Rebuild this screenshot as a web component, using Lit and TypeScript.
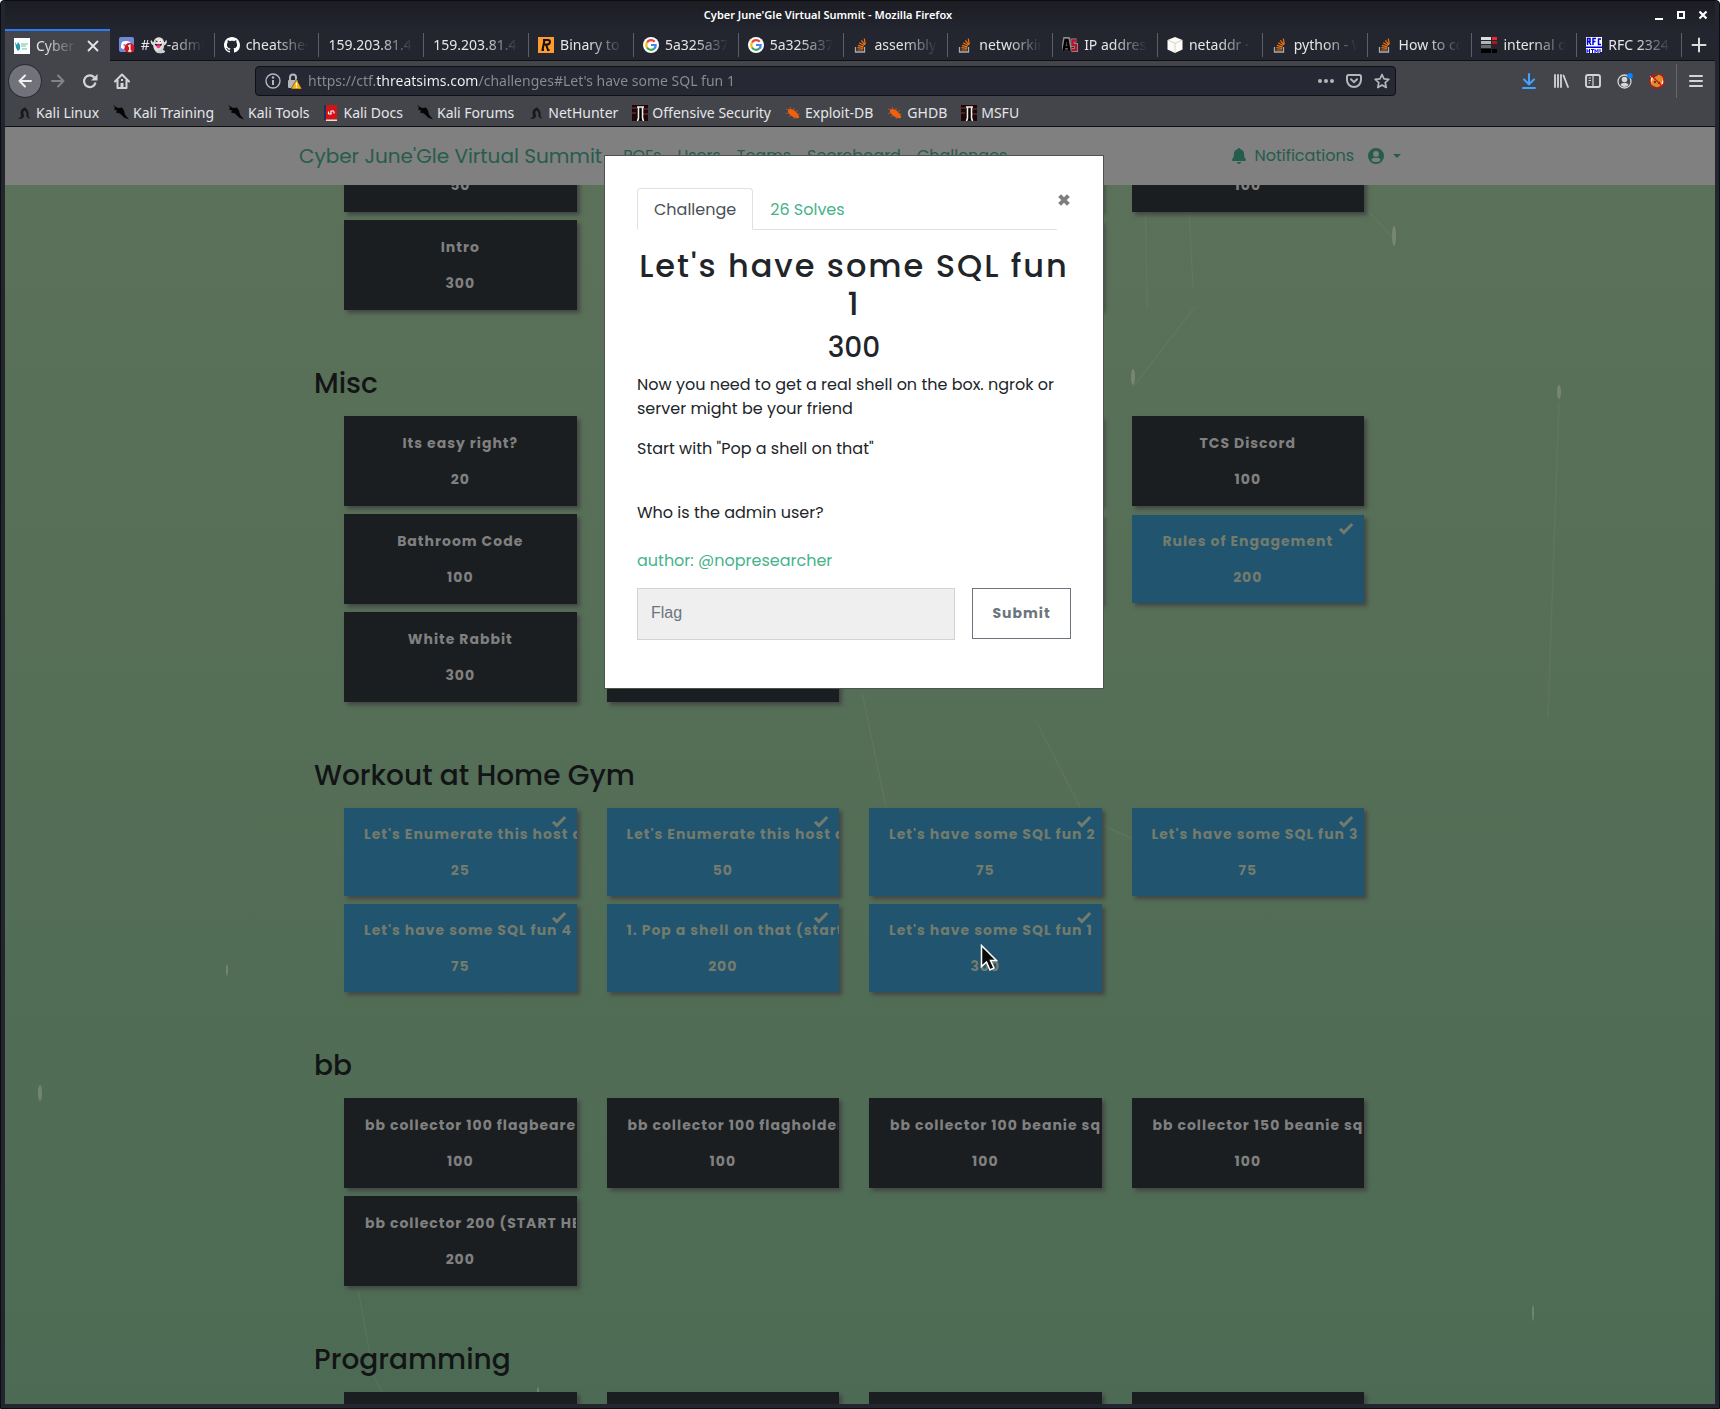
import { LitElement, html, svg, css, nothing, TemplateResult } from "lit";
import { customElement, property } from "lit/decorators.js";

type Card = { name?: string; points?: string; solved?: boolean };
type Section = { title?: string; cards: Card[] };
type Tab = { icon?: string; label: string };

const TABS: Tab[] = [
  { icon: "summit", label: "Cyber June" },
  { icon: "discord", label: "#👻-admin" },
  { icon: "github", label: "cheatsheets" },
  { label: "159.203.81.42" },
  { label: "159.203.81.42" },
  { icon: "rapid", label: "Binary to" },
  { icon: "google", label: "5a325a373" },
  { icon: "google", label: "5a325a373" },
  { icon: "stack", label: "assembly -" },
  { icon: "stack", label: "networking" },
  { icon: "as", label: "IP address" },
  { icon: "cube", label: "netaddr · P" },
  { icon: "stack", label: "python - W" },
  { icon: "stack", label: "How to con" },
  { icon: "bars", label: "internal do" },
  { icon: "rfc", label: "RFC 2324 -" },
];

const BOOKMARKS: Tab[] = [
  { icon: "dragon", label: "Kali Linux" },
  { icon: "blade", label: "Kali Training" },
  { icon: "blade", label: "Kali Tools" },
  { icon: "docs", label: "Kali Docs" },
  { icon: "blade", label: "Kali Forums" },
  { icon: "dragon", label: "NetHunter" },
  { icon: "offsec", label: "Offensive Security" },
  { icon: "bug", label: "Exploit-DB" },
  { icon: "bug", label: "GHDB" },
  { icon: "offsec", label: "MSFU" },
];

const SECTIONS: Section[] = [
  {
    cards: [{ points: "50" }, {}, {}, { points: "100" }, { name: "Intro", points: "300" }, {}, {}],
  },
  {
    title: "Misc",
    cards: [
      { name: "Its easy right?", points: "20" },
      {},
      {},
      { name: "TCS Discord", points: "100" },
      { name: "Bathroom Code", points: "100" },
      {},
      {},
      { name: "Rules of Engagement", points: "200", solved: true },
      { name: "White Rabbit", points: "300" },
      {},
    ],
  },
  {
    title: "Workout at Home Gym",
    cards: [
      { name: "Let's Enumerate this host a", points: "25", solved: true },
      { name: "Let's Enumerate this host a", points: "50", solved: true },
      { name: "Let's have some SQL fun 2", points: "75", solved: true },
      { name: "Let's have some SQL fun 3", points: "75", solved: true },
      { name: "Let's have some SQL fun 4", points: "75", solved: true },
      { name: "1. Pop a shell on that (start", points: "200", solved: true },
      { name: "Let's have some SQL fun 1", points: "300", solved: true },
    ],
  },
  {
    title: "bb",
    cards: [
      { name: "bb collector 100 flagbearer", points: "100" },
      { name: "bb collector 100 flagholder", points: "100" },
      { name: "bb collector 100 beanie sql", points: "100" },
      { name: "bb collector 150 beanie sql", points: "100" },
      { name: "bb collector 200 (START HER", points: "200" },
    ],
  },
  { title: "Programming", cards: [{}, {}, {}, {}] },
];

const ICONS: Record<string, TemplateResult> = {
  summit: svg`<rect width="16" height="16" fill="#fff"/><path d="M1 4l2 3 1-3 2 3v4l-2 2-2-3z" fill="#1d8fc4"/><path d="M3 7l2 1-1 4z" fill="#2fae5d"/><path d="M7 6h7M7 8h5M8 11h5" stroke="#5ec6a4" stroke-width="1.2"/>`,
  discord: svg`<rect width="15" height="15" rx="2" fill="#7289da"/><path d="M3 5c2-1.500 6-1.500 8 0 1 2 1.500 4 1 6-1 .8-2 1-2.500 1l-.7-1H5.500l-.7 1C4 12 3 11.500 2 11c-.3-2 .2-4 1-6z" fill="#fff"/><circle cx="5.300" cy="8" r="1" fill="#7289da"/><circle cx="10.500" cy="11" r="5" fill="#d8141c"/><path d="M9.200 9.300l1.600-1v5.600M9.200 13.900h3.200" stroke="#fff" stroke-width="1.500" fill="none"/>`,
  github: svg`<path fill="#fff" fill-rule="evenodd" d="M8 0C3.580 0 0 3.580 0 8c0 3.540 2.290 6.530 5.470 7.590.4.070.55-.17.55-.38 0-.19-.01-.82-.01-1.490-2.010.37-2.530-.49-2.690-.94-.09-.23-.48-.94-.82-1.130-.28-.15-.68-.52-.01-.53.63-.01 1.080.58 1.230.82.720 1.210 1.870.87 2.330.66.070-.52.280-.87.510-1.070-1.780-.2-3.640-.89-3.640-3.950 0-.87.310-1.590.82-2.150-.08-.2-.36-1.020.08-2.120 0 0 .67-.21 2.200.82.640-.18 1.320-.27 2-.27s1.360.09 2 .27c1.530-1.040 2.200-.82 2.200-.82.440 1.100.16 1.920.08 2.120.51.56.82 1.270.82 2.150 0 3.070-1.870 3.750-3.650 3.950.29.25.54.73.54 1.480 0 1.070-.01 1.930-.01 2.200 0 .21.15.46.55.38A8.010 8.010 0 0016 8c0-4.420-3.580-8-8-8z"/>`,
  rapid: svg`<rect width="16" height="16" fill="#ff9a2e"/><path d="M5 3h5c3 0 2.500 4.500-1 4.500H6M6.500 3L4.500 13M8 7.500l2 5.500M3.500 13h2.500M9 13h2.500" stroke="#15100a" stroke-width="2" fill="none"/>`,
  google: svg`<circle cx="8" cy="8" r="8" fill="#fff"/><g fill="none" stroke-width="2.200"><path d="M11.700 4.800A4.800 4.800 0 004 5.500" stroke="#ea4335"/><path d="M4 5.500a4.800 4.800 0 000 5" stroke="#fbbc05"/><path d="M4 10.500a4.800 4.800 0 007.200 1.200" stroke="#34a853"/><path d="M11.200 11.700A4.500 4.500 0 0012.700 8H8" stroke="#4285f4"/></g>`,
  stack: svg`<path d="M2.500 10v5h9v-5" fill="none" stroke="#a9aeb3" stroke-width="1.300"/><path d="M4.300 13H10M4.400 10.700l5.700.6M4.900 8.300l5.500 1.500M6.200 5.700l4.900 2.900M8.400 3.300l3.500 4.500M11.300 1.700l1 5.600" stroke="#f2730c" stroke-width="1.200"/>`,
  as: svg`<path d="M1 14L3 2h3l2 12M2.500 10h4" stroke="#8a8a8a" stroke-width="4" fill="none"/><path d="M1.500 14L3.500 3h2l2 11M2.500 10h4" stroke="#000" stroke-width="2.400" fill="none"/><path d="M14.500 3.500h-4V8h3.500v5H9.500" stroke="#999" stroke-width="4" fill="none"/><path d="M14.500 3.500h-4V8h3.500v5H9.500" stroke="#b5152c" stroke-width="2.500" fill="none"/>`,
  cube: svg`<path d="M8 0l7.500 3v9.500L8 16 .5 12.500V3z" fill="#fbfaf5"/><path d="M1 3.300l7 2.900 7-2.900M8 6.200V16" stroke="#cfcbbd" stroke-width=".8" fill="none"/>`,
  bars: svg`<path d="M0 0h10v3H0z" fill="#ddd"/><path d="M11 0h5v3h-5z" fill="#f0262d"/><path d="M0 4h10v3H0z" fill="#b4b4b6"/><path d="M11 4h5v3h-5z" fill="#93202a"/><path d="M0 8h10v3H0z" fill="#6a6a6d"/><path d="M11 8h5v3h-5z" fill="#401a1f"/><path d="M0 12h10v4H0zM11 12h5v4h-5z" fill="#000"/>`,
  rfc: svg`<rect width="16" height="16" fill="#fff"/><path d="M0 9.500h16v1.500H0z" fill="#0000e0"/><g fill="none" stroke="#0000e0" stroke-width="1.500"><path d="M1.500 8V1.500h2.500v3H2M3 4.500L5 8M7 8V1.500h3M7 4.500h2.500M15 2h-2.500v5.500H15"/><path d="M1 12v4M3.500 12v4M1 14h2.500M5 12.500h3M6.500 12v4M9 16v-3.500l1.500 2 1.500-2V16M14 12v3.500h2" stroke-width="1"/></g>`,
  dragon: svg`<path d="M1 14c3-.5 4-2 4-4-1-2-.5-6 3-7l1-1 1 1.500c2 1.500 3 4 2.500 6.500 0 2 .8 3 2 3.500-2.500.5-4-1-4-3.500 0-2-.5-4-2-4.500-1.500.5-1.500 3-.5 4.500.5 2.500-2 4.500-7 4z" fill="#17191c"/>`,
  blade: svg`<path d="M0 0l5 3 4-.5 2 3 1 4 4 5-5-2-4-4-4-1 1-2-3-1 1-2z" fill="#050505"/>`,
  docs: svg`<path d="M1 0h13v16H3l-2-1z" fill="#d01317"/><path d="M1 0h2v15H1z" fill="#18325c"/><path d="M3 14.500h11V16H3z" fill="#e9e1d8"/><path d="M11 6H8v3H5.500M11 8.500v-2M5.500 6.500V9" stroke="#fff" stroke-width="1.200" fill="none"/>`,
  offsec: svg`<rect width="16" height="16" fill="#1d0808"/><path d="M0 3h5M0 8h4M11 4h5M11 9h5" stroke="#5c2b2b" stroke-width="1.500"/><path d="M5 2h7M6.500 2v11l-1 3M10.500 2v11l1 3" stroke="#eee" stroke-width="1.600" fill="none"/><path d="M8.500 4v11" stroke="#000" stroke-width="1.500"/>`,
  bug: svg`<path d="M3 5c2-2 5-1 8 2 2 2 3.500 4 3 6-3 .5-6-.5-8-2.500C4 9 2.500 7 3 5z" fill="#f0600f"/><path d="M1 4l3 1M5 2l1 3M1 8.500l3-.5M4 12l2-2M9 3v3M13 5l-2 2M14.500 9h-3M9 14l1-3" stroke="#e2570f" stroke-width=".7"/>`,
  back: svg`<path d="M14 8H2.500M8 2.500L2.500 8 8 13.500" fill="none" stroke="currentColor" stroke-width="2" stroke-linecap="round" stroke-linejoin="round"/>`,
  forward: svg`<path d="M2 8h11.500M8 2.500L13.500 8 8 13.500" fill="none" stroke="currentColor" stroke-width="2" stroke-linecap="round" stroke-linejoin="round"/>`,
  reload: svg`<path d="M13.500 9.500A5.800 5.800 0 1112.300 4.500" fill="none" stroke="currentColor" stroke-width="2.200"/><path d="M15.500 1v6.500H9z" fill="currentColor"/>`,
  home: svg`<path d="M1 8.500L8 1.500l7 7M3.500 7v8h9V7" fill="none" stroke="currentColor" stroke-width="2" stroke-linejoin="round" stroke-linecap="round"/><path d="M6.500 10h3v5h-3zM7 6h2v2H7z" fill="currentColor"/>`,
  info: svg`<circle cx="8" cy="8" r="7" fill="none" stroke="currentColor" stroke-width="1.400"/><path d="M8 7v5" stroke="currentColor" stroke-width="2"/><circle cx="8" cy="4.500" r="1.200" fill="currentColor"/>`,
  lock: svg`<path d="M4 7V4.500a3 3 0 016 0V7" fill="none" stroke="#b5b6ba" stroke-width="2"/><rect x="2" y="7" width="10" height="8" rx="1" fill="#b5b6ba"/><path d="M10.500 6.500L16 16H5z" fill="#ffb300" stroke="#23252f" stroke-width=".5"/><path d="M10.500 9.500v3.200M10.500 13.500v1.300" stroke="#fff" stroke-width="1.300"/>`,
  dots: svg`<g fill="currentColor"><circle cx="2" cy="8" r="2"/><circle cx="8" cy="8" r="2"/><circle cx="14" cy="8" r="2"/></g>`,
  pocket: svg`<path d="M2.500 2h11A1.500 1.500 0 0115 3.500V7A7 7 0 011 7V3.500A1.500 1.500 0 012.500 2z" fill="none" stroke="currentColor" stroke-width="2"/><path d="M5 6.300L8 9.200l3-2.900" fill="none" stroke="currentColor" stroke-width="2" stroke-linecap="round"/>`,
  star: svg`<path d="M8 1.500l2 4.400 4.800.5-3.600 3.200 1 4.900L8 12l-4.200 2.500 1-4.900L1.200 6.400 6 5.900z" fill="none" stroke="currentColor" stroke-width="1.700" stroke-linejoin="round"/>`,
  download: svg`<path d="M8 1v10M3 6.500L8 11.300l5-4.800M2 15h12" fill="none" stroke="#45a1ff" stroke-width="2" stroke-linecap="round"/>`,
  library: svg`<path d="M2 2v12M5 2v12M8 2v12M10.500 2.500L15 14" stroke="currentColor" stroke-width="1.800" stroke-linecap="round"/>`,
  sidebar: svg`<rect x="1" y="2" width="14" height="12" rx="2" fill="none" stroke="currentColor" stroke-width="1.900"/><path d="M8 2v12M3.500 5h2.500M3.500 7.500h2.500M3.500 10h1.500" stroke="currentColor" stroke-width="1.200"/>`,
  account: svg`<circle cx="7.500" cy="8.500" r="6.500" fill="none" stroke="currentColor" stroke-width="1.300"/><circle cx="7.500" cy="6.500" r="2.800" fill="currentColor"/><path d="M3.500 12c1-3 7-3 8 0-2 2.500-6 2.500-8 0z" fill="currentColor"/><circle cx="13" cy="2.800" r="2.800" fill="#0a84ff"/>`,
  fox: svg`<path d="M1 3l4 1.500L11 1l3.500 3-1 8L8 14.500 2 12z" fill="#e08a2a"/><path d="M1 3l3 2-2 5zM12 12l3-2-1-4z" fill="#fff3d8"/><circle cx="6" cy="9" r="1" fill="#222"/><circle cx="10" cy="10" r="1" fill="#222"/><circle cx="8" cy="8" r="7.200" fill="none" stroke="#c81414" stroke-width="1.300"/><path d="M3 3l10 10" stroke="#c81414" stroke-width="1.300"/>`,
  menu: svg`<path d="M2 3h12M2 8h12M2 13h12" stroke="currentColor" stroke-width="2" stroke-linecap="round"/>`,
  plus: svg`<path d="M8 1.500v13M1.500 8h13" stroke="currentColor" stroke-width="2" stroke-linecap="round"/>`,
  x: svg`<path d="M3.500 3.500l9 9M12.500 3.500l-9 9" stroke="currentColor" stroke-width="1.800" stroke-linecap="round"/>`,
  minimize: svg`<path d="M4 11h8v2H4z" fill="currentColor"/>`,
  maximize: svg`<path d="M5 5h6v6H5z" fill="none" stroke="currentColor" stroke-width="2"/>`,
  shut: svg`<path d="M4.500 4.500l7 7M11.500 4.500l-7 7" stroke="currentColor" stroke-width="2.200"/>`,
  check: svg`<path d="M2 8.800l3.800 3.800L14.200 4" fill="none" stroke="currentColor" stroke-width="3"/>`,
  bell: svg`<path d="M8 0c-.7 0-1.200.5-1.200 1.100C4.400 1.600 2.900 3.500 2.900 6c0 3.500-.9 4.300-1.600 5.100-.6.700-.2 1.900.9 1.900h11.600c1.100 0 1.500-1.200.9-1.900-.7-.8-1.600-1.600-1.600-5.100 0-2.500-1.500-4.400-3.900-4.900C9.200.500 8.700 0 8 0zM6 14a2 2 0 004 0z" fill="currentColor"/>`,
  user: svg`<path fill-rule="evenodd" d="M8 0a8 8 0 100 16A8 8 0 008 0zm0 3a2.900 2.900 0 110 5.800A2.900 2.900 0 018 3zm0 11.100a6 6 0 01-4.700-2.200c.9-1.600 2.100-2.200 3.100-2.200 1 .4 2.200.4 3.200 0 1 0 2.200.6 3.100 2.200A6 6 0 018 14.100z" fill="currentColor"/>`,
  cross: svg`<path d="M3 3l10 10M13 3L3 13" stroke="currentColor" stroke-width="4.600"/>`,
};

const icon = (name: string, cls = "icon") =>
  html`<svg class=${cls} viewBox="0 0 16 16" aria-hidden="true">${ICONS[name]}</svg>`;

const chromeFont = css`"Noto Sans", "Open Sans", sans-serif`;
const pageFont = css`Poppins, Inter, "Open Sans", sans-serif`;

@customElement("browser-chrome")
class BrowserChrome extends LitElement {
  static styles = css`
    :host {
      display: block;
      flex: none;
      font: 14px/20px ${chromeFont};
      color: #e6e6e8;
    }
    .icon { width: 16px; height: 16px; flex: none; display: block; }
    button, a { font: inherit; color: inherit; background: none; border: 0; padding: 0; text-decoration: none; }
    .titlebar {
      height: 28px;
      display: flex;
      align-items: center;
      padding: 0 4px 0 0;
      background: linear-gradient(#1c1d23, #23252f);
    }
    .title { flex: 1; text-align: center; font-weight: 600; font-size: 11px; color: #fff; }
    .window-buttons { display: flex; gap: 6px; color: #fff; }
    .tabs { display: flex; height: 31px; background: #23252f; border-bottom: 1px solid #101116; }
    .tab {
      flex: 1 1 0;
      min-width: 0;
      display: flex;
      align-items: center;
      gap: 6px;
      padding: 0 9px;
      position: relative;
      text-align: left;
    }
    .tab::after { content: ""; position: absolute; right: 0; top: 4px; height: 24px; width: 1px; background: #5d5f66; }
    .tab.active { background: #43454b; border-top: 2px solid #2d7cf6; margin-bottom: -1px; }
    .tab.active::after { display: none; }
    .label {
      flex: 1;
      min-width: 0;
      overflow: hidden;
      white-space: nowrap;
      mask-image: linear-gradient(90deg, #000 calc(100% - 36px), transparent calc(100% - 2px));
    }
    .new-tab { width: 33px; display: grid; place-items: center; color: #dcdcdc; }
    .toolbar { display: flex; align-items: center; height: 39px; padding: 0 11px 0 4px; background: #43454b; color: #d4d4d6; }
    .round { width: 32px; height: 32px; border-radius: 50%; background: #72737a; outline: 1px solid #2c2d33; display: grid; place-items: center; color: #efefef; }
    .nav-buttons { display: flex; align-items: center; gap: 16px; }
    .forward { color: #818388; }
    .nav-buttons > .round + button { margin-left: -7px; }
    .address {
      flex: 1;
      display: flex;
      align-items: center;
      gap: 5px;
      height: 28px;
      margin: 0 125px;
      padding: 0 5px 0 9px;
      border: 1px solid #0f1014;
      border-radius: 4px;
      background: #262833;
      color: #b5b6ba;
    }
    .url {
      flex: 1;
      min-width: 0;
      border: 0;
      padding: 0 0 0 1px;
      font: inherit;
      color: transparent;
      background: linear-gradient(90deg, #8b8d93 0 69px, #f5f5f6 69px 172px, #8b8d93 172px);
      background-clip: text;
      -webkit-background-clip: text;
    }
    .address-actions { display: flex; gap: 12px; }
    .tools { display: flex; align-items: center; gap: 16px; }
    .rule { width: 1px; height: 34px; background: #66686e; margin: 0 -5px 0 -5px; }
    .bookmarks { display: flex; gap: 13px; height: 26px; background: #43454b; border-bottom: 1px solid #0f1014; padding: 0 10px; }
    .bookmark { display: flex; align-items: center; gap: 4px; white-space: nowrap; }
    .bookmark .icon { margin-left: 1px; }
  `;

  render() {
    return html`
      <header class="titlebar">
        <span class="title">Cyber June'Gle Virtual Summit - Mozilla Firefox</span>
        <span class="window-buttons">
          ${["minimize", "maximize", "shut"].map((n) => html`<button aria-label=${n}>${icon(n)}</button>`)}
        </span>
      </header>
      <div class="tabs">
        ${TABS.map(
          (t, i) => html`<button class="tab ${i === 0 ? "active" : ""}">
            ${t.icon ? icon(t.icon) : nothing}<span class="label">${t.label}</span>${i === 0 ? icon("x") : nothing}
          </button>`
        )}
        <button class="new-tab" aria-label="New tab">${icon("plus")}</button>
      </div>
      <div class="toolbar">
        <div class="nav-buttons">
          <button class="round" aria-label="Back">${icon("back")}</button>
          <button class="forward" aria-label="Forward">${icon("forward")}</button>
          <button aria-label="Reload">${icon("reload")}</button>
          <button aria-label="Home">${icon("home")}</button>
        </div>
        <div class="address">
          ${icon("info")}${icon("lock")}
          <input class="url" aria-label="Address" .value=${"https://ctf.threatsims.com/challenges#Let's have some SQL fun 1"} />
          <span class="address-actions">
            ${["dots", "pocket", "star"].map((n) => html`<button aria-label=${n}>${icon(n)}</button>`)}
          </span>
        </div>
        <div class="tools">
          ${["download", "library", "sidebar", "account", "fox"].map((n) => html`<button aria-label=${n}>${icon(n)}</button>`)}
          <span class="rule"></span>
          <button aria-label="Menu">${icon("menu")}</button>
        </div>
      </div>
      <nav class="bookmarks">
        ${BOOKMARKS.map((b) => html`<a class="bookmark" href="#">${icon(b.icon!)}${b.label}</a>`)}
      </nav>
    `;
  }
}

@customElement("challenge-card")
class ChallengeCard extends LitElement {
  @property({ attribute: false }) card: Card = {};
  static styles = css`
    :host { display: flex; align-items: center; min-width: 0; height: 90px; box-shadow: 3px 3px 4px #434746; }
    :host([solved]) { height: 88px; }
    .card {
      flex: 1;
      min-width: 0;
      height: 90px;
      position: relative;
      display: flex;
      flex-direction: column;
      align-items: center;
      gap: 15px;
      border: 1px solid #1a1e20;
      padding: 16px 20px;
      overflow: hidden;
      background: #1a1e20;
      color: #808080;
      font: 700 14px/21px ${pageFont};
      letter-spacing: 1px;
      white-space: nowrap;
    }
    .solved { height: 88px; border: 0; background: #21546f; color: #737b6d; }
    .name { max-width: 100%; min-height: 21px; }
    .check { position: absolute; top: 5px; right: 10px; width: 16px; height: 16px; }
  `;
  render() {
    const { name, points, solved } = this.card;
    return html`<button class="card ${solved ? "solved" : ""}">
      <span class="name">${name ?? nothing}</span>
      <span>${points ?? nothing}</span>
      ${solved ? icon("check", "check") : nothing}
    </button>`;
  }
}

@customElement("challenge-dialog")
class ChallengeDialog extends LitElement {
  static styles = css`
    :host { display: block; font: 16px/24px ${pageFont}; color: #212529; }
    .dialog { background: #fff; border: 1px solid #4d5450; padding: 32px 32px 48px; }
    .head { display: flex; align-items: flex-start; justify-content: space-between; }
    .tabs { flex: 1; display: flex; border-bottom: 1px solid #dee2e6; }
    .tab { padding: 9px 16px 7px; border: 1px solid transparent; border-radius: 4px 4px 0 0; color: #46b38a; text-decoration: none; margin-bottom: -1px; }
    .tab.active { border-color: #dee2e6; border-bottom-color: #fff; background: #fff; color: #495057; }
    .close { border: 0; background: none; padding: 5px 0 0; color: #7f7f7f; line-height: 0; }
    .close svg { width: 14px; height: 14px; }
    h2 { margin: 17px 0 0; font-size: 32px; line-height: 38px; font-weight: 500; letter-spacing: 2px; text-align: center; }
    h3 { margin: 8px 0; font-size: 28px; line-height: 34px; font-weight: 500; text-align: center; }
    p { margin: 0 0 16px; }
    .question { margin: 40px 0 24px; }
    .credit { margin-bottom: 15px; }
    .author { color: #46b38a; text-decoration: none; }
    form { display: flex; gap: 17px; align-items: flex-start; }
    input {
      flex: 1;
      min-width: 0;
      height: 52px;
      box-sizing: border-box;
      border: 1px solid #ced4da;
      background: #efefef;
      padding: 0 13px 3px;
      font: 16px "Liberation Sans", Arial, sans-serif;
      color: #495057;
    }
    input::placeholder { color: #6c757d; opacity: 1; }
    .submit { width: 99px; height: 51px; border: 1px solid #6c757d; background: #fff; color: #6c757d; font: 700 14px/21px ${pageFont}; letter-spacing: 1px; }
  `;
  render() {
    return html`<section class="dialog" role="dialog" aria-label="Challenge">
      <div class="head">
        <nav class="tabs">
          <a class="tab active" href="#">Challenge</a>
          <a class="tab" href="#">26 Solves</a>
        </nav>
        <button class="close" aria-label="Close">${icon("cross")}</button>
      </div>
      <h2>Let's have some SQL fun 1</h2>
      <h3>300</h3>
      <p>Now you need to get a real shell on the box. ngrok or server might be your friend</p>
      <p>Start with "Pop a shell on that"</p>
      <p class="question">Who is the admin user?</p>
      <p class="credit"><a class="author" href="#">author: @nopresearcher</a></p>
      <form @submit=${(e: Event) => e.preventDefault()}>
        <input aria-label="Flag" placeholder="Flag" />
        <button class="submit">Submit</button>
      </form>
    </section>`;
  }
}

@customElement("app-root")
class AppRoot extends LitElement {
  static styles = css`
    :host { display: block; height: 100vh; background: #fff; }
    .window {
      height: 100%;
      box-sizing: border-box;
      display: flex;
      flex-direction: column;
      border: 1px solid #0c0d10;
      border-radius: 4px 4px 0 0;
      background: #23252f;
      padding: 0 4px 4px;
      overflow: hidden;
    }
    .page {
      flex: 1;
      min-height: 0;
      position: relative;
      display: flex;
      flex-direction: column;
      overflow: hidden;
      background: linear-gradient(#5c7159, #4d6b54);
      font: 16px/24px ${pageFont};
    }
    .streaks { position: absolute; inset: 0; width: 100%; height: 100%; }
    .navbar { flex: none; height: 58px; background: #808080; padding-right: 12px; position: relative; z-index: 1; }
    .container { max-width: 1110px; margin: 0 auto; display: flex; align-items: center; }
    .navbar .container { height: 58px; }
    a { color: #265c4c; text-decoration: none; white-space: nowrap; }
    .brand { font-size: 20px; line-height: 30px; margin-right: 21px; }
    .links { flex: 1; display: flex; gap: 16px; }
    .account { display: flex; gap: 14px; padding-right: 8px; }
    .account a { display: flex; align-items: center; gap: 7px; }
    .icon { width: 16px; height: 16px; display: block; }
    .caret { border: 4px solid transparent; border-top-color: #265c4c; border-bottom: 0; margin-left: 2px; }
    .viewport { flex: 1; min-height: 0; overflow: hidden; padding-right: 12px; position: relative; }
    .board { max-width: 1110px; margin: -63px auto 0; box-sizing: border-box; padding: 0 15px; }
    .section { padding-bottom: 57px; }
    h3 { margin: 0 0 15px; font-size: 28px; line-height: 34px; font-weight: 500; color: #121416; }
    .grid { display: grid; grid-template-columns: repeat(4, minmax(0, 1fr)); gap: 8px 30px; margin: 0 30px; align-items: center; }
    .overlay { position: absolute; z-index: 2; top: 28px; left: 0; right: 12px; display: flex; justify-content: center; }
    challenge-dialog { width: 500px; }
    .cursor { position: absolute; z-index: 3; left: 975px; top: 817px; width: 18px; height: 28px; }
  `;
  render() {
    return html`<div class="window">
      <browser-chrome></browser-chrome>
      <div class="page">
        <svg class="streaks" viewBox="0 0 1710 1277" preserveAspectRatio="none" aria-hidden="true">
          <g stroke="#8c9a86" stroke-opacity=".14" fill="none" stroke-width="1.5">
            <path d="M1554 275L1543 590M1031 594L1075 680M857 565L882 685M353 1162L369 1250L384 1277M1387 110L1355 75M1190 180L1128 260M1140 60L1142 180M1183 60L1188 160M1080 690L1200 745" />
          </g>
          <g fill="#959d90" fill-opacity=".5">
            <ellipse cx="1389" cy="109" rx="2" ry="10" /><ellipse cx="1128" cy="250" rx="2" ry="8" />
            <ellipse cx="1554" cy="265" rx="2" ry="7" /><ellipse cx="222" cy="843" rx="1" ry="6" />
            <ellipse cx="35" cy="966" rx="2" ry="8" /><ellipse cx="1528" cy="1186" rx="1" ry="8" />
            <ellipse cx="533" cy="1265" rx="1" ry="5" />
          </g>
        </svg>
        <nav class="navbar">
          <div class="container">
            <a class="brand" href="#">Cyber June'Gle Virtual Summit</a>
            <div class="links">
              ${["POFs", "Users", "Teams", "Scoreboard", "Challenges"].map((l) => html`<a href="#">${l}</a>`)}
            </div>
            <div class="account">
              <a href="#">${icon("bell")}Notifications</a>
              <a href="#" aria-label="Account">${icon("user")}<span class="caret"></span></a>
            </div>
          </div>
        </nav>
        <main class="viewport">
          <div class="board">
            ${SECTIONS.map(
              (s) => html`<section class="section">
                ${s.title ? html`<h3>${s.title}</h3>` : nothing}
                <div class="grid">
                  ${s.cards.map((c) => html`<challenge-card .card=${c} ?solved=${!!c.solved}></challenge-card>`)}
                </div>
              </section>`
            )}
          </div>
        </main>
        <div class="overlay"><challenge-dialog></challenge-dialog></div>
        <svg class="cursor" viewBox="0 0 18 28" aria-hidden="true">
          <path d="M1.500 1.500v21l5-4.500 3.500 8 4-2-3.500-7.500h6z" fill="#0b0b0b" stroke="#fff" stroke-width="1.500" />
        </svg>
      </div>
    </div>`;
  }
}
